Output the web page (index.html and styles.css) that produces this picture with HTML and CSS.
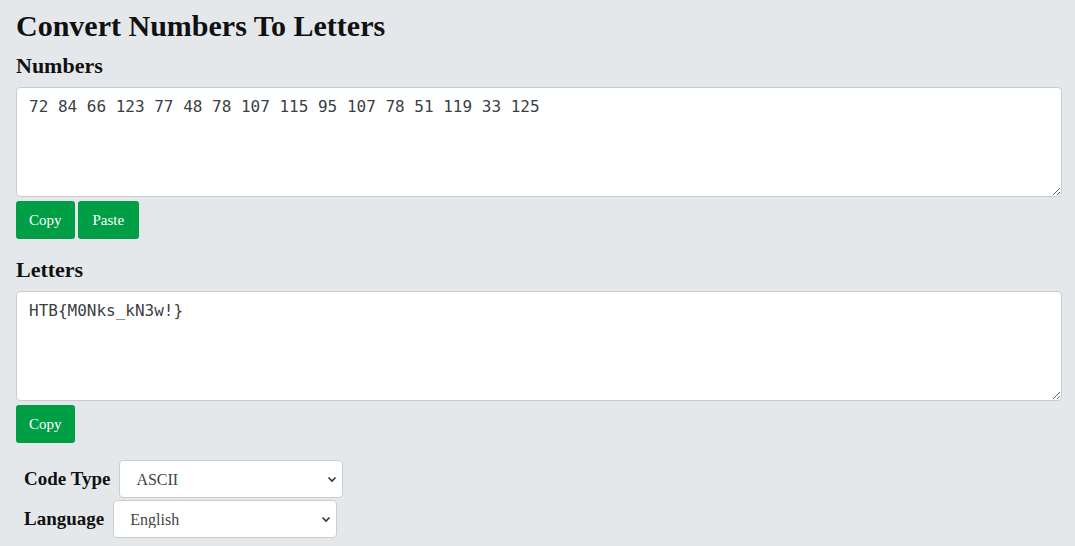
FILE: index.html
```html
<!DOCTYPE html>
<html>
  <head>
    <title>Convert Numbers To Letters</title>
    <link rel="stylesheet" href="styles.css">
  </head>
  <body>
    <h1>Convert Numbers To Letters</h1>

    <h2>Numbers</h2>
    <textarea id="numbers" class="box">72 84 66 123 77 48 78 107 115 95 107 78 51 119 33 125</textarea>
    <div class="actions">
      <button>Copy</button>
      <button class="wide">Paste</button>
    </div>

    <h2>Letters</h2>
    <textarea id="letters" class="box">HTB{M0Nks_kN3w!}</textarea>
    <div class="actions">
      <button>Copy</button>
    </div>

    <div class="options">
      <div class="option">
        <label for="code-type">Code Type</label>
        <div class="select-wrap">
          <select id="code-type">
            <option>ASCII</option>
            <option>Unicode</option>
          </select>
          <svg class="chevron" width="10" height="10" viewBox="0 0 10 10"><path d="M1.5 3.5 L5 7 L8.5 3.5" fill="none" stroke="#333" stroke-width="1.6"/></svg>
        </div>
      </div>
      <div class="option">
        <label for="language">Language</label>
        <div class="select-wrap">
          <select id="language">
            <option>English</option>
          </select>
          <svg class="chevron" width="10" height="10" viewBox="0 0 10 10"><path d="M1.5 3.5 L5 7 L8.5 3.5" fill="none" stroke="#333" stroke-width="1.6"/></svg>
        </div>
      </div>
    </div>
  </body>
</html>
```

FILE: styles.css
```css
body {
  margin: 0;
  padding: 6px 13px 0 16px;
  background-color: #e5e8eb;
  font-family: "Liberation Serif", serif;
  color: #111;
}
h1 {
  font-size: 30px;
  line-height: 40px;
  margin: 0;
}
h2 {
  font-size: 22px;
  line-height: 30px;
  margin: 5px 0 6px 0;
}
.actions + h2 {
  margin-top: 16px;
}
.box {
  display: block;
  box-sizing: border-box;
  width: 100%;
  height: 110px;
  padding: 7px 12px;
  border: 1px solid #ccc;
  border-radius: 4px;
  background: #fff;
  font-family: "DejaVu Sans Mono", monospace;
  font-size: 16px;
  line-height: 24px;
  color: #3b3f45;
  margin: 0;
}
.actions {
  display: flex;
  gap: 3px;
  margin-top: 4px;
}
button {
  height: 38px;
  padding: 0 13px;
  border: none;
  border-radius: 3px;
  background-color: #009e45;
  color: #fff;
  font-family: "Liberation Serif", serif;
  font-size: 15px;
  cursor: pointer;
}
button.wide {
  padding: 0 15px;
}
.options {
  display: flex;
  flex-direction: column;
  gap: 2px;
  margin-top: 17px;
  padding-left: 8px;
}
.option {
  display: flex;
  align-items: center;
  gap: 9px;
}
.option label {
  font-weight: bold;
  font-size: 19px;
}
.select-wrap {
  position: relative;
}
select {
  appearance: none;
  -webkit-appearance: none;
  box-sizing: border-box;
  width: 224px;
  height: 38px;
  padding: 0 16px;
  border: 1px solid #ccc;
  border-radius: 4px;
  background: #fff;
  font-family: "Liberation Serif", serif;
  font-size: 16px;
  color: #444;
}
.chevron {
  position: absolute;
  right: 6px;
  top: 14px;
  pointer-events: none;
}
```
